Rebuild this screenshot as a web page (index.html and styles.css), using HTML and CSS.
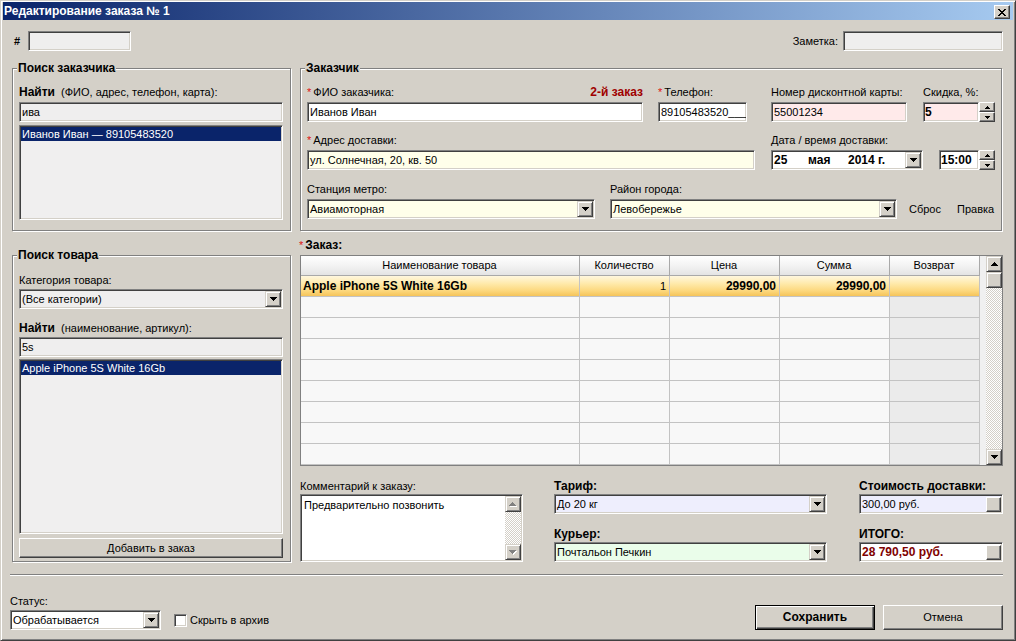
FILE: index.html
```html
<!DOCTYPE html>
<html lang="ru">
<head>
<meta charset="utf-8">
<title>Редактирование заказа № 1</title>
<link rel="stylesheet" href="styles.css">
</head>
<body>
<div class="window">
  <div class="titlebar">
    <span class="title">Редактирование заказа № 1</span>
    <span class="close-btn"><svg width="8" height="7" viewBox="0 0 8 7"><path d="M0 0h2v1H0zM6 0h2v1H6zM1 1h2v1H1zM5 1h2v1H5zM2 2h4v1H2zM3 3h2v1H3zM2 4h4v1H2zM1 5h2v1H1zM5 5h2v1H5zM0 6h2v1H0zM6 6h2v1H6z" fill="#000"/></svg></span>
  </div>
  <div class="content">
    <div class="toprow">
      <div class="inl"><span class="hash">#</span><div class="field ro w-num"></div></div>
      <div class="inl"><span class="note-lbl">Заметка:</span><div class="field ro w-note"></div></div>
    </div>

    <div class="main">
      <div class="leftcol">
        <div class="group g1">
          <div class="legend">Поиск заказчика</div>
          <div class="lbl mt11"><b>Найти</b>&nbsp; (ФИО, адрес, телефон, карта):</div>
          <div class="field ro mt3">ива</div>
          <div class="listbox lb1 mt3"><div class="item sel">Иванов Иван — 89105483520</div></div>
        </div>
        <div class="group g2">
          <div class="legend">Поиск товара</div>
          <div class="lbl mt12">Категория товара:</div>
          <div class="combo ro mt2"><span class="val">(Все категории)</span><span class="dd"><svg width="7" height="4" viewBox="0 0 7 4"><path d="M0 0h7v1H6v1H5v1H4v1H3V3H2V2H1V1H0z" fill="#000"/></svg></span></div>
          <div class="lbl mt13"><b>Найти</b>&nbsp; (наименование, артикул):</div>
          <div class="field ro mt2">5s</div>
          <div class="listbox lb2 mt2"><div class="item sel">Apple iPhone 5S White 16Gb</div></div>
          <div class="btn btn-add mt4">Добавить в заказ</div>
        </div>
      </div>

      <div class="rightcol">
        <div class="group g3">
          <div class="legend">Заказчик</div>
          <div class="frow mt11">
            <div class="fld w-fio">
              <div class="lbl split"><span><span class="req">*</span>ФИО заказчика:</span><b class="dred">2-й заказ</b></div>
              <div class="field mt3">Иванов Иван</div>
            </div>
            <div class="fld w-tel">
              <div class="lbl"><span class="req">*</span>Телефон:</div>
              <div class="field mt3">89105483520___</div>
            </div>
            <div class="fld w-card">
              <div class="lbl">Номер дисконтной карты:</div>
              <div class="field pink mt3">55001234</div>
            </div>
            <div class="fld w-disc">
              <div class="lbl">Скидка, %:</div>
              <div class="spinrow mt3">
                <div class="field pink"><b>5</b></div>
                <div class="spin">
                  <span class="sb"><svg width="5" height="3" viewBox="0 0 5 3"><path d="M2 0h1v1h1v1h1v1H0V2h1V1h1z" fill="#000"/></svg></span>
                  <span class="sb"><svg width="5" height="3" viewBox="0 0 5 3"><path d="M0 0h5v1H4v1H3v1H2V2H1V1H0z" fill="#000"/></svg></span>
                </div>
              </div>
            </div>
          </div>

          <div class="frow mt12">
            <div class="fld w-addr">
              <div class="lbl"><span class="req">*</span>Адрес доставки:</div>
              <div class="field yel mt3">ул. Солнечная, 20, кв. 50</div>
            </div>
            <div class="fld w-date">
              <div class="lbl">Дата / время доставки:</div>
              <div class="combo mt3"><span class="val"><b class="d1">25</b><b class="d2">мая</b><b>2014 г.</b></span><span class="dd"><svg width="7" height="4" viewBox="0 0 7 4"><path d="M0 0h7v1H6v1H5v1H4v1H3V3H2V2H1V1H0z" fill="#000"/></svg></span></div>
            </div>
            <div class="fld w-time">
              <div class="lbl">&nbsp;</div>
              <div class="spinrow mt3">
                <div class="field"><b>15:00</b></div>
                <div class="spin">
                  <span class="sb"><svg width="5" height="3" viewBox="0 0 5 3"><path d="M2 0h1v1h1v1h1v1H0V2h1V1h1z" fill="#000"/></svg></span>
                  <span class="sb"><svg width="5" height="3" viewBox="0 0 5 3"><path d="M0 0h5v1H4v1H3v1H2V2H1V1H0z" fill="#000"/></svg></span>
                </div>
              </div>
            </div>
          </div>

          <div class="frow mt13">
            <div class="fld w-metro">
              <div class="lbl">Станция метро:</div>
              <div class="combo yel mt3"><span class="val">Авиамоторная</span><span class="dd"><svg width="7" height="4" viewBox="0 0 7 4"><path d="M0 0h7v1H6v1H5v1H4v1H3V3H2V2H1V1H0z" fill="#000"/></svg></span></div>
            </div>
            <div class="fld w-dist">
              <div class="lbl">Район города:</div>
              <div class="combo yel mt3"><span class="val">Левобережье</span><span class="dd"><svg width="7" height="4" viewBox="0 0 7 4"><path d="M0 0h7v1H6v1H5v1H4v1H3V3H2V2H1V1H0z" fill="#000"/></svg></span></div>
            </div>
            <div class="links"><span>Сброс</span><span>Правка</span></div>
          </div>
        </div>

        <div class="order-lbl"><span class="req">*</span><b>Заказ:</b></div>
        <div class="grid">
          <div class="gmain">
            <div class="grow ghead"><div class="c">Наименование товара</div><div class="c">Количество</div><div class="c">Цена</div><div class="c">Сумма</div><div class="c">Возврат</div></div>
            <div class="grow gsel"><div class="c"><b>Apple iPhone 5S White 16Gb</b></div><div class="c r">1</div><div class="c r"><b>29990,00</b></div><div class="c r"><b>29990,00</b></div><div class="c c5"></div></div>
            <div class="grow"><div class="c"></div><div class="c"></div><div class="c"></div><div class="c"></div><div class="c c5"></div></div>
            <div class="grow"><div class="c"></div><div class="c"></div><div class="c"></div><div class="c"></div><div class="c c5"></div></div>
            <div class="grow"><div class="c"></div><div class="c"></div><div class="c"></div><div class="c"></div><div class="c c5"></div></div>
            <div class="grow"><div class="c"></div><div class="c"></div><div class="c"></div><div class="c"></div><div class="c c5"></div></div>
            <div class="grow"><div class="c"></div><div class="c"></div><div class="c"></div><div class="c"></div><div class="c c5"></div></div>
            <div class="grow"><div class="c"></div><div class="c"></div><div class="c"></div><div class="c"></div><div class="c c5"></div></div>
            <div class="grow"><div class="c"></div><div class="c"></div><div class="c"></div><div class="c"></div><div class="c c5"></div></div>
            <div class="grow"><div class="c"></div><div class="c"></div><div class="c"></div><div class="c"></div><div class="c c5"></div></div>
          </div>
          <div class="vscroll">
            <span class="sbtn"><svg width="7" height="4" viewBox="0 0 7 4"><path d="M3 0h1v1h1v1h1v1h1v1H0V3h1V2h1V1h1z" fill="#000"/></svg></span>
            <span class="thumb"></span>
            <span class="track"></span>
            <span class="sbtn"><svg width="7" height="4" viewBox="0 0 7 4"><path d="M0 0h7v1H6v1H5v1H4v1H3V3H2V2H1V1H0z" fill="#000"/></svg></span>
          </div>
        </div>

        <div class="bottom">
          <div class="bcol c-comment">
            <div class="lbl">Комментарий к заказу:</div>
            <div class="memo mt1">
              <div class="memo-txt">Предварительно позвонить</div>
              <div class="mscroll">
                <span class="sbtn"><svg width="8" height="5" viewBox="0 0 8 5"><path d="M4 1h1v1h1v1h1v1h1v1H1V4h1V3h1V2h1z" fill="#fff"/><path d="M3 0h1v1h1v1h1v1h1v1H0V3h1V2h1V1h1z" fill="#808080"/></svg></span>
                <span class="track"></span>
                <span class="sbtn"><svg width="8" height="5" viewBox="0 0 8 5"><path d="M1 1h7v1H7v1H6v1H5v1H4V4H3V3H2V2H1z" fill="#fff"/><path d="M0 0h7v1H6v1H5v1H4v1H3V3H2V2H1V1H0z" fill="#808080"/></svg></span>
              </div>
            </div>
          </div>
          <div class="bcol c-tariff">
            <div class="lbl"><b>Тариф:</b></div>
            <div class="combo lav mt1"><span class="val">До 20 кг</span><span class="dd"><svg width="7" height="4" viewBox="0 0 7 4"><path d="M0 0h7v1H6v1H5v1H4v1H3V3H2V2H1V1H0z" fill="#000"/></svg></span></div>
            <div class="lbl mt14"><b>Курьер:</b></div>
            <div class="combo mint mt1"><span class="val">Почтальон Печкин</span><span class="dd"><svg width="7" height="4" viewBox="0 0 7 4"><path d="M0 0h7v1H6v1H5v1H4v1H3V3H2V2H1V1H0z" fill="#000"/></svg></span></div>
          </div>
          <div class="bcol c-cost">
            <div class="lbl"><b>Стоимость доставки:</b></div>
            <div class="combo lav mt1"><span class="val">300,00 руб.</span><span class="mini"></span></div>
            <div class="lbl mt14"><b>ИТОГО:</b></div>
            <div class="combo mt1"><span class="val"><b class="dred2">28 790,50 руб.</b></span><span class="mini"></span></div>
          </div>
        </div>
      </div>
    </div>

    <div class="sep"></div>

    <div class="footer">
      <div class="status">
        <div class="lbl">Статус:</div>
        <div class="status-row mt2">
          <div class="combo c-status"><span class="val">Обрабатывается</span><span class="dd"><svg width="7" height="4" viewBox="0 0 7 4"><path d="M0 0h7v1H6v1H5v1H4v1H3V3H2V2H1V1H0z" fill="#000"/></svg></span></div>
          <span class="chk"></span>
          <span class="chk-lbl">Скрыть в архив</span>
        </div>
      </div>
      <div class="btns">
        <div class="btn fbtn default"><b>Сохранить</b></div>
        <div class="btn fbtn">Отмена</div>
      </div>
    </div>
  </div>
</div>
</body>
</html>
```
FILE: styles.css
```css
* { box-sizing: border-box; }
html, body { margin: 0; padding: 0; }
body {
  background: #d4d0c8;
  font-family: "Liberation Sans", Arial, sans-serif;
  font-size: 11px;
  line-height: 13px;
  color: #000;
}
b { font-weight: bold; font-size: 12px; }

.mt1 { margin-top: 1px; }
.mt2 { margin-top: 2px; }
.mt3 { margin-top: 3px; }
.mt4 { margin-top: 4px; }
.mt11 { margin-top: 11px; }
.mt12 { margin-top: 12px; }
.mt13 { margin-top: 13px; }
.mt14 { margin-top: 14px; }

.window {
  width: 1016px;
  height: 641px;
  border: 1px solid;
  border-color: #d4d0c8 #404040 #404040 #d4d0c8;
  box-shadow: inset 1px 1px #fff, inset -1px -1px #808080;
  padding: 1px 2px 2px 2px;
  display: flex;
  flex-direction: column;
  overflow: hidden;
  background: #d4d0c8;
}

.titlebar {
  flex: none;
  height: 18px;
  background: linear-gradient(to right, #0a246a, #a6caf0);
  display: flex;
  align-items: center;
  justify-content: space-between;
  padding: 0 3px 0 1px;
}
.title { color: #fff; font-weight: bold; font-size: 12px; }
.close-btn {
  width: 16px;
  height: 14px;
  margin-top: 2px;
  background: #d4d0c8;
  border: 1px solid;
  border-color: #fff #404040 #404040 #fff;
  box-shadow: inset -1px -1px #808080;
  display: flex;
  align-items: center;
  justify-content: center;
}

.content {
  flex: 1;
  padding: 11px 10px 0 9px;
  display: flex;
  flex-direction: column;
}

.toprow {
  display: flex;
  justify-content: space-between;
  align-items: center;
  height: 20px;
}
.inl { display: flex; align-items: center; }
.hash { margin-left: 2px; margin-right: 8px; font-weight: bold; }
.note-lbl { margin-right: 5px; }
.w-num { width: 103px; }
.w-note { width: 160px; }

.field, .combo, .listbox, .memo {
  border: 1px solid;
  border-color: #808080 #fff #fff #808080;
  box-shadow: inset 1px 1px #404040, inset -1px -1px #d4d0c8;
  background: #fff;
}
.field {
  height: 20px;
  padding: 0 3px 0 2px;
  display: flex;
  align-items: center;
  white-space: nowrap;
  overflow: hidden;
}
.ro { background: #efeeee; }
.pink { background: #ffeaea; }
.yel { background: #ffffea; }
.lav { background: #eeeefd; }
.mint { background: #eafdea; }

.combo {
  height: 20px;
  padding: 1px;
  display: flex;
  align-items: stretch;
}
.combo .val {
  flex: 1;
  display: flex;
  align-items: center;
  padding-left: 1px;
  white-space: nowrap;
  overflow: hidden;
}
.dd {
  width: 16px;
  flex: none;
  background: #d4d0c8;
  border: 1px solid;
  border-color: #d4d0c8 #404040 #404040 #d4d0c8;
  box-shadow: inset 1px 1px #fff, inset -1px -1px #808080;
  display: flex;
  align-items: center;
  justify-content: center;
}
.mini {
  width: 15px;
  height: 15px;
  align-self: center;
  background: #d4d0c8;
  border: 1px solid;
  border-color: #fff #404040 #404040 #fff;
  box-shadow: inset -1px -1px #808080;
}

.main {
  display: flex;
  gap: 9px;
  margin-top: 17px;
}
.leftcol { width: 279px; display: flex; flex-direction: column; }
.rightcol { width: 703px; display: flex; flex-direction: column; }

.group {
  border: 1px solid #808080;
  box-shadow: inset 1px 1px #fff, 1px 1px #fff;
  display: flex;
  flex-direction: column;
}
.legend {
  align-self: flex-start;
  margin: -7px 0 0 -2px;
  padding: 0 1px;
  background: #d4d0c8;
  font-weight: bold;
  font-size: 12px;
  line-height: 13px;
}
.g1 { padding: 0 7px 10px 6px; }
.g2 { margin-top: 24px; flex: 1; padding: 0 7px 3px 6px; }
.g3 { width: 702px; padding: 0 6px 11px 6px; }

.lbl { height: 13px; line-height: 13px; white-space: nowrap; }
.split { display: flex; justify-content: space-between; }
.req { color: #e01010; margin-right: 2px; }
.dred { color: #a00000; }
.dred2 { color: #800000; }

.listbox { padding: 1px; background: #f0efef; }
.lb1 { height: 95px; }
.lb2 { flex: 1; }
.item { height: 14px; line-height: 14px; padding-left: 1px; white-space: nowrap; }
.sel { background: #0a246a; color: #fff; }

.btn {
  height: 20px;
  background: #d4d0c8;
  border: 1px solid;
  border-color: #fff #404040 #404040 #fff;
  box-shadow: inset -1px -1px #808080;
  display: flex;
  align-items: center;
  justify-content: center;
}

.frow { display: flex; }
.fld { display: flex; flex-direction: column; flex: none; }
.w-fio { width: 336px; }
.w-tel { width: 89px; margin-left: 15px; }
.w-card { width: 136px; margin-left: 24px; }
.w-disc { width: 72px; margin-left: 16px; }
.w-addr { width: 448px; }
.w-date { width: 152px; margin-left: 16px; }
.w-time { width: 56px; margin-left: 16px; }
.w-metro { width: 288px; }
.w-dist { width: 287px; margin-left: 15px; }
.links {
  margin-left: 12px;
  align-self: flex-end;
  height: 20px;
  display: flex;
  align-items: center;
  gap: 16px;
}
.d1 { width: 34px; }
.d2 { width: 40px; }

.spinrow { display: flex; height: 20px; }
.spinrow .field { flex: 1; padding-left: 1px; }
.spin { width: 16px; display: flex; flex-direction: column; }
.sb {
  flex: 1;
  background: #d4d0c8;
  border: 1px solid;
  border-color: #fff #404040 #404040 #fff;
  box-shadow: inset -1px -1px #808080;
  display: flex;
  align-items: center;
  justify-content: center;
}

.order-lbl { margin-top: 8px; height: 13px; line-height: 13px; margin-left: -1px; }

.grid {
  margin-top: 3px;
  height: 211px;
  border: 1px solid #808080;
  display: flex;
  background: #f0f0f0;
}
.gmain { flex: 1; display: flex; flex-direction: column; }
.grow {
  display: grid;
  grid-template-columns: 279px 90px 110px 110px 90px;
  width: 679px;
  height: 21px;
}
.grow .c {
  border-right: 1px solid #c3c3c3;
  border-bottom: 1px solid #c3c3c3;
  background: #f8f8f8;
  padding: 0 3px 0 2px;
  line-height: 20px;
  white-space: nowrap;
  overflow: hidden;
}
.grow .c5 { background: #ebebeb; }
.ghead { height: 20px; }
.ghead .c {
  background: linear-gradient(#ffffff, #f3f3f3 50%, #e4e4e4);
  border-color: #a9a9a9;
  text-align: center;
  line-height: 19px;
}
.gsel .c, .gsel .c5 {
  background: linear-gradient(#fff7de 0%, #ffe9a8 40%, #fcd77c 75%, #f5c45a 100%);
}
.r { text-align: right; }

.vscroll { width: 16px; display: flex; flex-direction: column; }
.sbtn, .thumb {
  height: 16px;
  flex: none;
  background: #d4d0c8;
  border: 1px solid;
  border-color: #d4d0c8 #404040 #404040 #d4d0c8;
  box-shadow: inset 1px 1px #fff, inset -1px -1px #808080;
  display: flex;
  align-items: center;
  justify-content: center;
}
.track {
  flex: 1;
  background: repeating-conic-gradient(#ffffff 0 25%, #d4d0c8 0 50%) 0 0 / 2px 2px;
}

.bottom { display: flex; margin-top: 14px; }
.bcol { display: flex; flex-direction: column; }
.c-comment { width: 223px; }
.c-tariff { width: 273px; margin-left: 31px; }
.c-cost { width: 144px; margin-left: 32px; }
.memo { height: 68px; padding: 1px; display: flex; }
.memo-txt { flex: 1; padding: 3px 2px; }
.mscroll { width: 16px; display: flex; flex-direction: column; }

.sep {
  margin-top: 12px;
  margin-left: -2px;
  height: 2px;
  border-top: 1px solid #808080;
  border-bottom: 1px solid #fff;
}

.footer {
  margin-top: 19px;
  margin-left: -2px;
  display: flex;
  justify-content: space-between;
  align-items: flex-end;
}
.status-row { display: flex; align-items: center; }
.c-status { width: 151px; }
.chk {
  width: 13px;
  height: 13px;
  margin-left: 13px;
  background: #fff;
  border: 1px solid;
  border-color: #808080 #fff #fff #808080;
  box-shadow: inset 1px 1px #404040, inset -1px -1px #d4d0c8;
}
.chk-lbl { margin-left: 3px; }
.btns { display: flex; gap: 8px; }
.fbtn { width: 120px; height: 25px; }
.default {
  border: 1px solid #000;
  box-shadow: inset 1px 1px #fff, inset -1px -1px #404040, inset -2px -2px #808080;
}
```
